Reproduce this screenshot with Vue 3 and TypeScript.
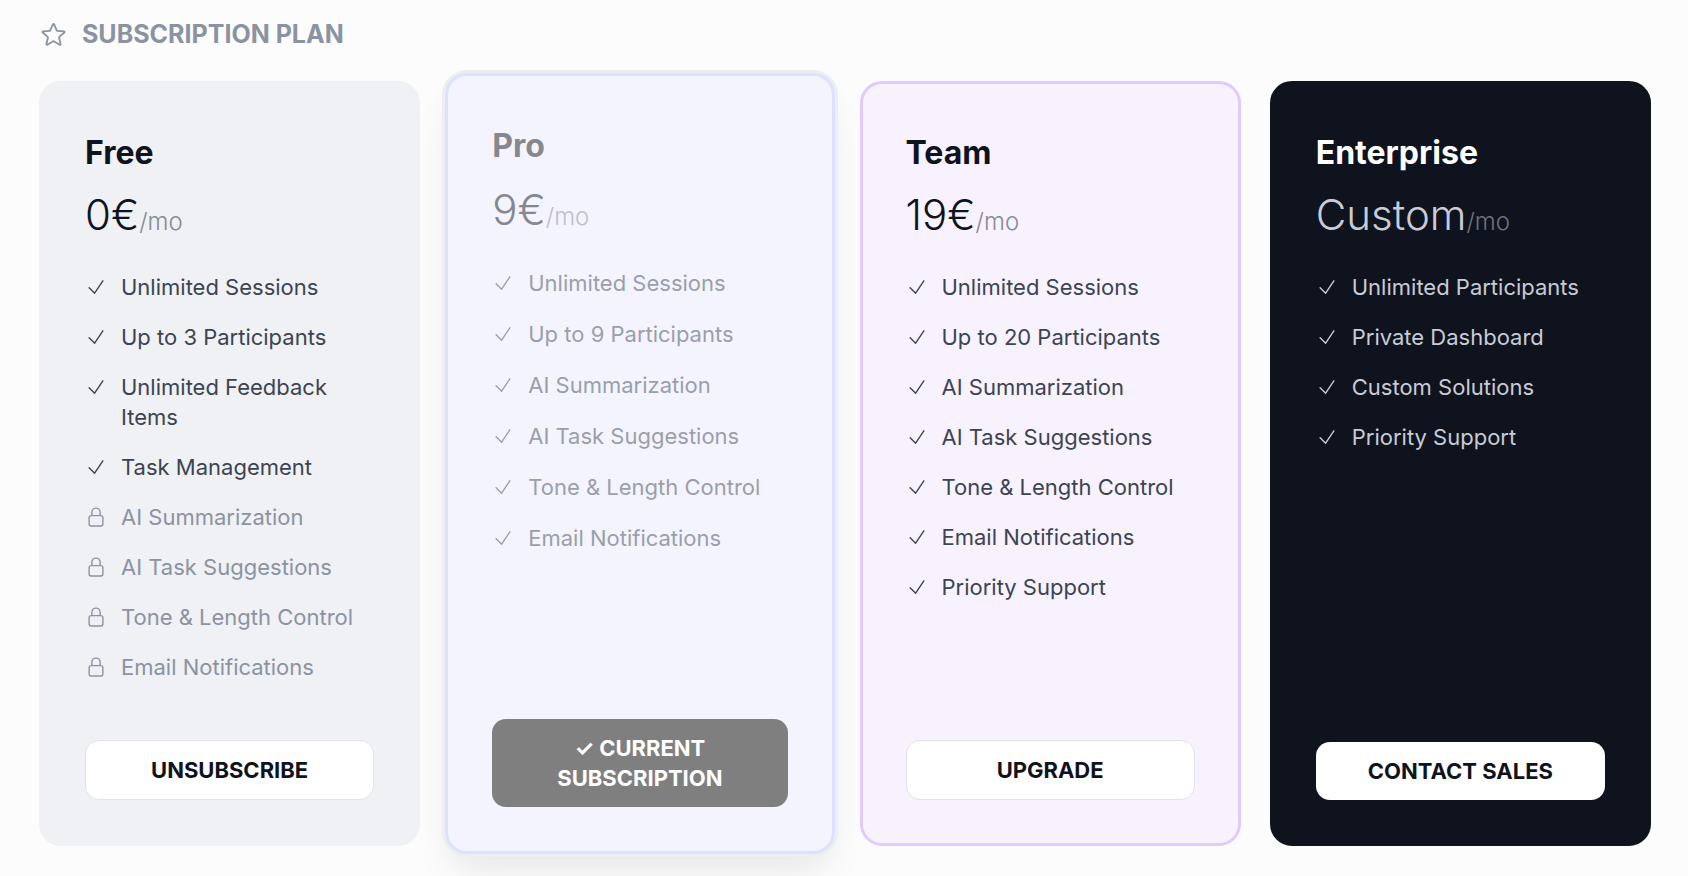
<script setup lang="ts">
interface Feature {
  label: string
  locked?: boolean
}

interface Plan {
  id: string
  name: string
  price: string
  action: string
  current?: boolean
  features: Feature[]
}

const open = (...labels: string[]): Feature[] => labels.map((label) => ({ label }))
const locked = (...labels: string[]): Feature[] => labels.map((label) => ({ label, locked: true }))

const plans: Plan[] = [
  {
    id: 'free',
    name: 'Free',
    price: '0€',
    action: 'Unsubscribe',
    features: [
      ...open('Unlimited Sessions', 'Up to 3 Participants', 'Unlimited Feedback Items', 'Task Management'),
      ...locked('AI Summarization', 'AI Task Suggestions', 'Tone & Length Control', 'Email Notifications'),
    ],
  },
  {
    id: 'pro',
    name: 'Pro',
    price: '9€',
    action: '✓ Current Subscription',
    current: true,
    features: open(
      'Unlimited Sessions',
      'Up to 9 Participants',
      'AI Summarization',
      'AI Task Suggestions',
      'Tone & Length Control',
      'Email Notifications',
    ),
  },
  {
    id: 'team',
    name: 'Team',
    price: '19€',
    action: 'Upgrade',
    features: open(
      'Unlimited Sessions',
      'Up to 20 Participants',
      'AI Summarization',
      'AI Task Suggestions',
      'Tone & Length Control',
      'Email Notifications',
      'Priority Support',
    ),
  },
  {
    id: 'enterprise',
    name: 'Enterprise',
    price: 'Custom',
    action: 'Contact Sales',
    features: open('Unlimited Participants', 'Private Dashboard', 'Custom Solutions', 'Priority Support'),
  },
]
</script>

<template>
  <main class="page">
    <header class="heading">
      <svg class="star" viewBox="0 0 24 24" aria-hidden="true">
        <path
          d="M11.48 3.499a.562.562 0 0 1 1.04 0l2.125 5.111a.563.563 0 0 0 .475.345l5.518.442c.499.04.701.663.321.988l-4.204 3.602a.563.563 0 0 0-.182.557l1.285 5.385a.562.562 0 0 1-.84.61l-4.725-2.885a.562.562 0 0 0-.586 0L6.982 20.54a.562.562 0 0 1-.84-.61l1.285-5.386a.562.562 0 0 0-.182-.557l-4.204-3.602a.562.562 0 0 1 .321-.988l5.518-.442a.563.563 0 0 0 .475-.345L11.48 3.5Z"
        />
      </svg>
      <h1>Subscription Plan</h1>
    </header>

    <section class="plans">
      <article v-for="plan in plans" :key="plan.id" class="card" :class="plan.id">
        <h2 class="name">{{ plan.name }}</h2>
        <p class="price">{{ plan.price }}<span class="period">/mo</span></p>
        <ul class="features">
          <li v-for="feature in plan.features" :key="feature.label" :class="{ locked: feature.locked }">
            <svg class="mark" viewBox="0 0 24 24" aria-hidden="true">
              <path
                v-if="feature.locked"
                d="M16.5 10.5V6.75a4.5 4.5 0 1 0-9 0v3.75m-.75 11.25h10.5a2.25 2.25 0 0 0 2.25-2.25v-6.75a2.25 2.25 0 0 0-2.25-2.25H6.75a2.25 2.25 0 0 0-2.25 2.25v6.75a2.25 2.25 0 0 0 2.25 2.25Z"
              />
              <path v-else d="m4.5 12.75 6 6 9-13.5" />
            </svg>
            <span>{{ feature.label }}</span>
          </li>
        </ul>
        <button type="button" class="action" :disabled="plan.current">{{ plan.action }}</button>
      </article>
    </section>
  </main>
</template>

<style>
body {
  background: #fcfcfc;
}
</style>

<style scoped>
.page {
  box-sizing: border-box;
  padding: 20px 37px 30px 39px;
  font-family: Inter, 'Liberation Sans', sans-serif;
  color: #0f131d;
}

.heading {
  display: flex;
  align-items: center;
  gap: 14px;
  margin-bottom: 32px;
  color: #8b93a2;
}

.heading h1 {
  margin: 0;
  font-size: 25px;
  line-height: 29px;
  font-weight: 700;
  text-transform: uppercase;
}

svg {
  flex: none;
  fill: none;
  stroke: currentColor;
  stroke-width: 1.5;
  stroke-linecap: round;
  stroke-linejoin: round;
}

.star {
  width: 29px;
  height: 29px;
}

.plans {
  display: grid;
  grid-template-columns: repeat(4, minmax(0, 1fr));
  gap: 29px;
}

.card {
  display: flex;
  flex-direction: column;
  box-sizing: border-box;
  min-height: 765px;
  padding: 43px;
  border: 3px solid transparent;
  border-radius: 22px;
}

.free {
  background: #f0f1f5;
  border-color: #f0f1f5;
}

.pro {
  margin: -8px -4px;
  padding: 44px;
  background: #f4f4ff;
  border-color: #dbe1ff;
  box-shadow:
    0 0 0 3px #eceeef,
    0 24px 40px -8px rgba(0, 0, 0, 0.08),
    0 8px 24px rgba(0, 0, 0, 0.02);
}

.team {
  background: #f8f2ff;
  border-color: #e0caff;
}

.enterprise {
  background: #0f131d;
  border-color: #0f131d;
}

.name {
  margin: 4px 0 0;
  font-size: 32px;
  line-height: 44px;
  font-weight: 700;
}

.price {
  margin: 12px 0 0;
  font-size: 42px;
  line-height: 56px;
  font-weight: 300;
}

.period {
  font-size: 24px;
  color: #888990;
}

.features {
  display: flex;
  flex-direction: column;
  gap: 20px;
  margin: 22px 0 0;
  padding: 0;
  list-style: none;
  font-size: 22px;
  line-height: 30px;
  color: #3c4452;
}

.features li {
  display: flex;
  gap: 14px;
}

.features .locked {
  color: #8b93a2;
}

.mark {
  width: 22px;
  height: 22px;
  margin-top: 4px;
}

.action {
  margin-top: auto;
  padding: 14px 28px;
  border: 1px solid #e1e3ea;
  border-radius: 14px;
  background: #ffffff;
  color: #0f131d;
  font-family: inherit;
  font-size: 22px;
  line-height: 30px;
  font-weight: 700;
  text-transform: uppercase;
  cursor: pointer;
}

.pro .name,
.pro .price {
  color: #86888d;
}

.pro .price {
  margin-top: 14px;
}

.pro .period {
  color: #bfc0c9;
}

.pro .features {
  gap: 21px;
  margin-top: 23px;
  color: #9a9fa9;
}

.pro .action {
  border: 0;
  background: #7f7f7f;
  color: #ffffff;
  cursor: default;
}

.enterprise .name {
  color: #ffffff;
}

.enterprise .price,
.enterprise .features {
  color: #c8ccd6;
}

.enterprise .period {
  color: #70737b;
}

.enterprise .action {
  border: 0;
}

@media (max-width: 1200px) {
  .plans {
    grid-template-columns: repeat(2, minmax(0, 1fr));
  }
}
</style>
